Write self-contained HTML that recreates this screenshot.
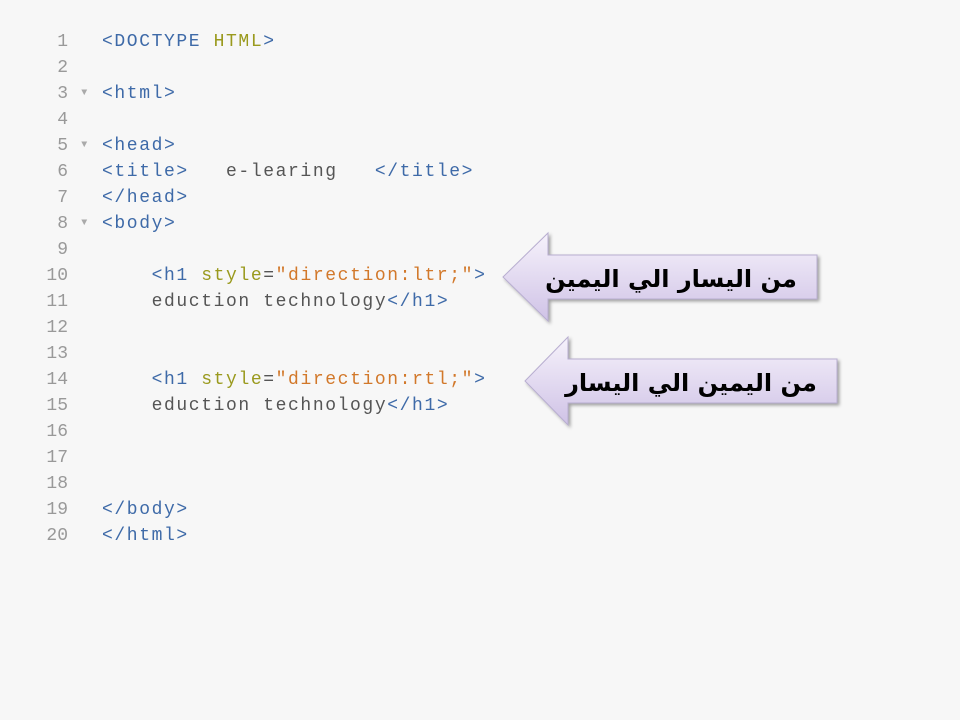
<!DOCTYPE html>
<html><head><style>
body{margin:0;width:960px;height:720px;background:#f7f7f7;overflow:hidden;position:relative}
.c{position:absolute;left:0;top:29px;font-family:"Liberation Mono",monospace;font-size:18px;letter-spacing:1.6px;line-height:26px;color:#555}
.l{height:26px;white-space:pre}
.n{display:inline-block;width:68px;text-align:right;color:#999;letter-spacing:0}
.a{display:inline-block;width:34px;color:#aaa;font-size:10px;text-align:center;vertical-align:top}
.t{color:#3e6aa8}.y{color:#9a9a1e}.o{color:#d2782a}
</style></head><body>
<div class="c"><div class="l"><span class="n">1</span><span class="a"></span><span class="t">&lt;DOCTYPE</span> <span class="y">HTML</span><span class="t">&gt;</span></div><div class="l"><span class="n">2</span></div><div class="l"><span class="n">3</span><span class="a">▼</span><span class="t">&lt;html&gt;</span></div><div class="l"><span class="n">4</span></div><div class="l"><span class="n">5</span><span class="a">▼</span><span class="t">&lt;head&gt;</span></div><div class="l"><span class="n">6</span><span class="a"></span><span class="t">&lt;title&gt;</span>   e-learing   <span class="t">&lt;/title&gt;</span></div><div class="l"><span class="n">7</span><span class="a"></span><span class="t">&lt;/head&gt;</span></div><div class="l"><span class="n">8</span><span class="a">▼</span><span class="t">&lt;body&gt;</span></div><div class="l"><span class="n">9</span></div><div class="l"><span class="n">10</span><span class="a"></span>    <span class="t">&lt;h1</span> <span class="y">style</span>=<span class="o">"direction:ltr;"</span><span class="t">&gt;</span></div><div class="l"><span class="n">11</span><span class="a"></span>    eduction technology<span class="t">&lt;/h1&gt;</span></div><div class="l"><span class="n">12</span></div><div class="l"><span class="n">13</span></div><div class="l"><span class="n">14</span><span class="a"></span>    <span class="t">&lt;h1</span> <span class="y">style</span>=<span class="o">"direction:rtl;"</span><span class="t">&gt;</span></div><div class="l"><span class="n">15</span><span class="a"></span>    eduction technology<span class="t">&lt;/h1&gt;</span></div><div class="l"><span class="n">16</span></div><div class="l"><span class="n">17</span></div><div class="l"><span class="n">18</span></div><div class="l"><span class="n">19</span><span class="a"></span><span class="t">&lt;/body&gt;</span></div><div class="l"><span class="n">20</span><span class="a"></span><span class="t">&lt;/html&gt;</span></div></div>
<svg width="960" height="720" style="position:absolute;left:0;top:0">
<defs><linearGradient id="g" x1="0" y1="0" x2="0" y2="1"><stop offset="0" stop-color="#f6f2fb"/><stop offset="1" stop-color="#cfc2e6"/></linearGradient>
<filter id="s"><feDropShadow dx="2" dy="2" stdDeviation="1.5" flood-color="#000" flood-opacity="0.35"/></filter></defs>
<polygon points="503,277 548,233 548,255 817,255 817,299 548,299 548,321" fill="url(#g)" stroke="#b8aed0" stroke-width="1" filter="url(#s)"/>
<polygon points="525,381 568,337 568,359 837,359 837,403 568,403 568,425" fill="url(#g)" stroke="#b8aed0" stroke-width="1" filter="url(#s)"/>
<text x="671" y="287" text-anchor="middle" direction="rtl" font-family="'DejaVu Sans',sans-serif" font-weight="bold" font-size="24" fill="#000">من اليسار الي اليمين</text>
<text x="691" y="391" text-anchor="middle" direction="rtl" font-family="'DejaVu Sans',sans-serif" font-weight="bold" font-size="24" fill="#000">من اليمين الي اليسار</text>
</svg>
</body></html>
